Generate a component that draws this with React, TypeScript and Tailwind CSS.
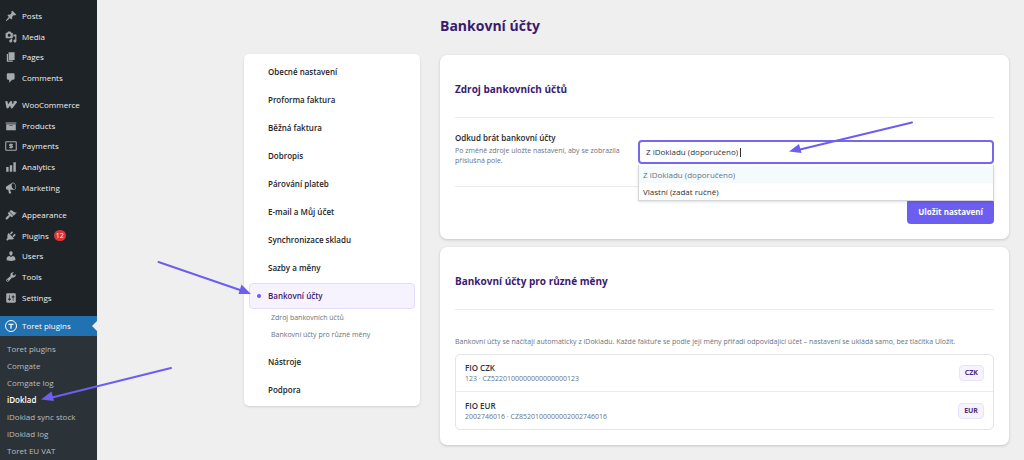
import { useState } from "react";
import type { ReactNode } from "react";

interface MenuItem {
  label: string;
  icon: ReactNode;
  badge?: number;
}

function Dashicon({ d }: { d: string }) {
  return (
    <svg className="w-3 h-3 shrink-0" viewBox="0 0 20 20" fill="currentColor" aria-hidden="true">
      <path fillRule="evenodd" d={d} />
    </svg>
  );
}

function WooIcon() {
  return (
    <svg className="w-3 h-3 shrink-0" viewBox="0 0 24 24" fill="none" stroke="currentColor" aria-hidden="true">
      <path strokeWidth="4.5" strokeLinejoin="round" d="M1 6h2L5 16.500L12 6.500L13.500 16.500L22.500 5" />
      <path strokeWidth="3" d="M17 6h6" />
    </svg>
  );
}

function PaymentsIcon() {
  return (
    <svg className="w-3 h-3 shrink-0" viewBox="0 0 24 24" fill="none" stroke="currentColor" aria-hidden="true">
      <rect x="1.500" y="3.500" width="21" height="17" rx="1" strokeWidth="2.200" />
      <path strokeWidth="2.200" d="M15.500 9.300h-5a1.400 1.400 0 0 0 0 2.800h3a1.400 1.400 0 0 1 0 2.800H8.500M12 7v10" />
    </svg>
  );
}

function ToretIcon() {
  return (
    <svg className="w-3 h-3 shrink-0" viewBox="0 0 24 24" fill="none" stroke="currentColor" aria-hidden="true">
      <circle cx="12" cy="12" r="11" strokeWidth="2" />
      <path strokeWidth="2.500" d="M7 8.500h10M12 8.500v9" />
    </svg>
  );
}

const contentMenu: MenuItem[] = [
  { label: "Posts", icon: <Dashicon d="M10.44 3.02l1.82-1.82 6.36 6.35-1.83 1.82c-1.05-.68-2.48-.57-3.41.36l-.75.75c-.92.93-1.04 2.35-.35 3.41l-1.83 1.82-2.41-2.41-2.8 2.79c-.42.42-3.38 2.71-3.8 2.29s1.86-3.39 2.28-3.81l2.79-2.79L4.1 9.36l1.83-1.82c1.05.69 2.48.57 3.4-.36l.75-.75c.93-.92 1.05-2.35.36-3.41z" /> },
  { label: "Media", icon: <Dashicon d="M13 11V4c0-.55-.45-1-1-1h-1.67L9 1H5L3.67 3H2c-.55 0-1 .45-1 1v7c0 .55.45 1 1 1h10c.55 0 1-.45 1-1zM7 4.5c1.38 0 2.5 1.12 2.5 2.5S8.38 9.5 7 9.5 4.5 8.38 4.5 7 5.62 4.5 7 4.5zM14 6h5v10.5c0 1.38-1.12 2.5-2.5 2.5S14 17.88 14 16.5s1.12-2.5 2.5-2.5c.17 0 .34.02.5.05V9h-3V6zm-4 8.05V13h2v3.5c0 1.38-1.12 2.5-2.5 2.5S7 17.88 7 16.5 8.12 14 9.5 14c.17 0 .34.02.5.05z" /> },
  { label: "Pages", icon: <Dashicon d="M6 15V2h10v13H6zm-1 1h8v2H3V5h2v11z" /> },
  { label: "Comments", icon: <Dashicon d="M5 2h9c1.1 0 2 .9 2 2v7c0 1.1-.9 2-2 2h-2l-5 5v-5H5c-1.1 0-2-.9-2-2V4c0-1.1.9-2 2-2z" /> },
];

const shopMenu: MenuItem[] = [
  { label: "WooCommerce", icon: <WooIcon /> },
  { label: "Products", icon: <Dashicon d="M19 4v2H1V4h18zM2 7h16v10H2V7zm11 3V9H7v1h6z" /> },
  { label: "Payments", icon: <PaymentsIcon /> },
  { label: "Analytics", icon: <Dashicon d="M18 18V2h-4v16h4zm-6 0V7H8v11h4zm-6 0v-8H2v8h4z" /> },
  { label: "Marketing", icon: <Dashicon d="M18.15 5.94c.46 1.62.38 3.22-.02 4.48-.42 1.28-1.26 2.18-2.3 2.48-.16.06-.26.06-.4.06-.06.02-.12.02-.18.02-.06.02-.14.02-.22.02h-6.8l2.22 5.5c.02.14-.06.26-.14.34-.08.1-.24.16-.34.16H6.95c-.1 0-.26-.06-.34-.16-.08-.08-.16-.2-.14-.34l-1-5.5H4.25l-.02-.02c-.5.06-1.08-.18-1.54-.62s-.88-1.08-1.06-1.88c-.24-.8-.2-1.56-.02-2.2.18-.62.58-1.08 1.06-1.3l.02-.02 9-5.4c.1-.06.18-.1.24-.16.06-.04.14-.08.24-.12.16-.08.28-.12.5-.18 1.04-.3 2.24.1 3.22.98s1.84 2.24 2.26 3.86zm-2.58 5.98h-.02c.4-.1.74-.34 1.04-.7.58-.7.86-1.76.86-3.04 0-.64-.1-1.3-.28-1.98-.34-1.36-1.02-2.5-1.78-3.24s-1.68-1.1-2.46-.88c-.82.22-1.4.96-1.7 2-.32 1.04-.28 2.36.06 3.72.38 1.36 1 2.5 1.8 3.24.78.74 1.62 1.1 2.48.88z" /> },
];

const adminMenu: MenuItem[] = [
  { label: "Appearance", icon: <Dashicon d="M14.48 11.06L7.41 3.99l1.5-1.5c.5-.56 2.3-.47 3.51.32 1.21.8 1.43 1.28 2.91 2.1 1.18.64 2.45 1.26 4.45.85zm-.71.71L6.7 4.7 4.93 6.47c-.39.39-.39 1.02 0 1.41l1.06 1.06c.39.39.39 1.03 0 1.42-.6.6-1.43 1.11-2.21 1.69-.35.26-.7.53-1.01.84C1.43 14.23.4 16.08 1.4 17.07c.99 1 2.84-.03 4.18-1.36.31-.31.58-.66.85-1.02.57-.78 1.08-1.61 1.69-2.21.39-.39 1.02-.39 1.41 0l1.06 1.06c.39.39 1.02.39 1.41 0z" /> },
  { label: "Plugins", badge: 12, icon: <Dashicon d="M13.11 4.36L9.87 7.6 8 5.73l3.24-3.24c.35-.34 1.05-.2 1.56.32.52.51.66 1.21.31 1.55zm-8 1.77l.91-1.12 9.01 9.01-1.19.84c-.71.71-2.63 1.16-3.82 1.16H6.14L4.9 17.26c-.59.59-1.54.59-2.12 0-.59-.58-.59-1.53 0-2.12l1.24-1.24v-3.88c0-1.13.4-3.19 1.09-3.89zm7.26 3.97l3.24-3.24c.34-.35 1.04-.21 1.55.31.52.51.66 1.21.31 1.55l-3.24 3.25z" /> },
  { label: "Users", icon: <Dashicon d="M10 9.25c-2.27 0-2.73-3.44-2.73-3.44C7 4.02 7.82 2 9.97 2c2.16 0 2.98 2.02 2.71 3.81 0 0-.41 3.44-2.68 3.44zm0 2.57L12.72 10c2.39 0 4.52 2.33 4.52 4.53v2.49s-3.65 1.13-7.24 1.13c-3.65 0-7.24-1.13-7.24-1.13v-2.49c0-2.25 1.94-4.48 4.47-4.48z" /> },
  { label: "Tools", icon: <Dashicon d="M16.68 9.77c-1.34 1.34-3.3 1.67-4.95.99l-5.41 6.52c-.99.99-2.59.99-3.58 0s-.99-2.59 0-3.57l6.52-5.42c-.68-1.65-.35-3.61.99-4.95 1.28-1.28 3.12-1.62 4.72-1.06l-2.89 2.89 2.82 2.82 2.86-2.87c.53 1.58.18 3.39-1.08 4.65zM3.81 16.21c.4.39 1.04.39 1.43 0 .4-.4.4-1.04 0-1.43-.39-.4-1.03-.4-1.43 0-.39.39-.39 1.03 0 1.43z" /> },
  { label: "Settings", icon: <Dashicon d="M18 16V4c0-1.1-.9-2-2-2H4c-1.1 0-2 .9-2 2v12c0 1.1.9 2 2 2h12c1.1 0 2-.9 2-2zM8 11h1c.55 0 1 .45 1 1s-.45 1-1 1H8v1.5c0 .28-.22.5-.5.5s-.5-.22-.5-.5V13H6c-.55 0-1-.45-1-1s.45-1 1-1h1V5.5c0-.28.22-.5.5-.5s.5.22.5.5V11zm5-2h-1c-.55 0-1-.45-1-1s.45-1 1-1h1V5.5c0-.28.22-.5.5-.5s.5.22.5.5V7h1c.55 0 1 .45 1 1s-.45 1-1 1h-1v5.5c0 .28-.22.5-.5.5s-.5-.22-.5-.5V9z" /> },
];

const toretMenu = ["Toret plugins", "Comgate", "Comgate log", "iDoklad", "iDoklad sync stock", "iDoklad log", "Toret EU VAT"];

const sections = [
  "Obecné nastavení",
  "Proforma faktura",
  "Běžná faktura",
  "Dobropis",
  "Párování plateb",
  "E-mail a Můj účet",
  "Synchronizace skladu",
  "Sazby a měny",
  "Bankovní účty",
  "Nástroje",
  "Podpora",
];

const subsections = ["Zdroj bankovních účtů", "Bankovní účty pro různé měny"];

const sources = ["Z iDokladu (doporučeno)", "Vlastní (zadat ručně)"];

const accounts = [
  { name: "FIO CZK", number: "123 · CZ5220100000000000000123", currency: "CZK" },
  { name: "FIO EUR", number: "2002746016 · CZ8520100000002002746016", currency: "EUR" },
];

function MenuGroup({ items, className }: { items: MenuItem[]; className: string }) {
  return (
    <ul className={`flex flex-col ${className}`}>
      {items.map((item) => (
        <li key={item.label} className="flex-1 flex">
          <a href="#" className="flex-1 flex items-center gap-[5px] pl-[5px] text-[#a7aaad]">
            {item.icon}
            <span className="text-[8px] leading-3 text-[#f0f0f1]">{item.label}</span>
            {item.badge && (
              <span className="h-[11px] px-[2px] rounded-full bg-[#d63638] text-white text-[7px] leading-[11px]">
                {item.badge}
              </span>
            )}
          </a>
        </li>
      ))}
    </ul>
  );
}

function AdminSidebar() {
  return (
    <nav className="w-[97px] shrink-0 flex flex-col pt-1.5 bg-[#1d2327]">
      <MenuGroup items={contentMenu} className="h-[82px]" />
      <MenuGroup items={shopMenu} className="h-[103px] mt-[7px]" />
      <MenuGroup items={adminMenu} className="h-[103px] mt-[7px]" />
      <a href="#" className="relative mt-2 h-5 flex items-center gap-[5px] pl-[5px] bg-[#2271b1] text-white text-[8px] leading-3">
        <ToretIcon />
        Toret plugins
        <span className="absolute right-0 top-[5px] border-y-[5px] border-y-transparent border-r-[5px] border-r-[#efefef]" />
      </a>
      <ul className="flex-1 pt-1 bg-[#2c3338]">
        {toretMenu.map((label) => (
          <li key={label}>
            <a
              href="#"
              className={`block pl-[7px] text-[8px] leading-[17px] whitespace-nowrap ${
                label === "iDoklad" ? "text-white font-semibold" : "text-[#b9bcbf]"
              }`}
            >
              {label}
            </a>
          </li>
        ))}
      </ul>
    </nav>
  );
}

function SectionNav() {
  return (
    <nav className="w-[176px] shrink-0 mt-[54px] px-[5px] pt-[5px] pb-[3px] rounded-[5px] bg-white shadow-sm">
      <ul className="flex flex-col gap-0.5">
        {sections.map((label) => {
          const active = label === "Bankovní účty";
          return (
            <li key={label}>
              <a
                href="#"
                className={`h-[26px] flex items-center pl-[7px] rounded-[4px] border text-[8px] font-semibold ${
                  active ? "bg-[#f6f3fe] border-[#e4dcfc] text-[#3b1a6e]" : "border-transparent text-[#1d2327]"
                }`}
              >
                <span className={`w-1 h-1 mr-[7px] rounded-full ${active ? "bg-[#6c5cf0]" : ""}`} />
                {label}
              </a>
              {active && (
                <ul className="pb-1 pl-[22px]">
                  {subsections.map((sub) => (
                    <li key={sub}>
                      <a href="#" className="block text-[7px] leading-[17px] text-[#6b7280]">
                        {sub}
                      </a>
                    </li>
                  ))}
                </ul>
              )}
            </li>
          );
        })}
      </ul>
    </nav>
  );
}

function SourceField() {
  const [source, setSource] = useState(sources[0]);

  return (
    <div className="relative flex-1">
      <div className="h-6 flex items-center gap-0.5 pl-1.5 rounded-[4px] border-2 border-[#7467f0] bg-white">
        <input
          id="source"
          role="combobox"
          aria-expanded="true"
          aria-controls="source-options"
          value={source}
          onChange={(e) => setSource(e.target.value)}
          className="field-sizing-content text-[8px] leading-3 text-[#2c3338] outline-none"
        />
        <span className="w-px h-[9px] bg-[#2c3338]" />
      </div>
      <ul
        id="source-options"
        role="listbox"
        className="absolute top-[25px] inset-x-0 z-10 pt-px border border-t-0 border-[#d5d7da] bg-white shadow-sm"
      >
        {sources.map((option) => (
          <li
            key={option}
            role="option"
            aria-selected={option === source}
            onClick={() => setSource(option)}
            className={`pl-1 text-[8px] leading-[17px] ${
              option === source ? "bg-[#f5fafd] text-[#64748b]" : "text-[#303030]"
            }`}
          >
            {option}
          </li>
        ))}
      </ul>
    </div>
  );
}

function Card({ title, children }: { title: string; children: ReactNode }) {
  return (
    <section className="px-[15px] pb-[15px] rounded-[7px] bg-white shadow-[0_1px_3px_rgba(0,0,0,0.18)]">
      <h2 className="pt-[26px] pb-5 border-b border-[#eaebed] text-[10px] leading-4 font-bold text-[#3b1a6e]">
        {title}
      </h2>
      {children}
    </section>
  );
}

function Arrows() {
  return (
    <svg
      className="absolute top-0 left-0 z-20 pointer-events-none"
      width="1024"
      height="460"
      fill="#6c5ff0"
      stroke="#6c5ff0"
      aria-hidden="true"
    >
      <path strokeWidth="2" strokeLinecap="round" d="M158.500 262L240 290M171 368L52 397.500M912 122.500L800 149.500" />
      <path stroke="none" d="M251 294l-9.500-9.500-3 9.500zM41 399.500l10.500-8 2.500 9.500zM789 151.500l10-7.500 2.500 9z" />
    </svg>
  );
}

export default function App() {
  return (
    <div className="relative min-h-screen flex overflow-hidden bg-[#efefef] font-['Open_Sans','Noto_Sans',sans-serif]">
      <AdminSidebar />
      <div className="flex-1 flex items-start gap-5 pl-[147px] pr-[15px]">
        <SectionNav />
        <main className="flex-1 min-w-0">
          <h1 className="pt-4 pb-[19px] text-[14px] leading-5 font-bold text-[#3b1a6e]">Bankovní účty</h1>
          <div className="flex flex-col gap-2">
            <Card title="Zdroj bankovních účtů">
              <div className="flex pt-[14px] pb-5 border-b border-[#eaebed]">
                <div className="w-[183px] pr-3">
                  <label htmlFor="source" className="block text-[8px] leading-3 font-semibold text-[#1d2327]">
                    Odkud brát bankovní účty
                  </label>
                  <p className="mt-0.5 text-[7px] leading-[10px] text-[#6b7280]">
                    Po změně zdroje uložte nastavení, aby se zobrazila příslušná pole.
                  </p>
                </div>
                <div className="flex-1 flex pt-2">
                  <SourceField />
                </div>
              </div>
              <div className="flex justify-end pt-3">
                <button className="h-[25px] px-[11px] rounded-[4px] bg-[#6c5ff0] text-white text-[8px] font-bold">
                  Uložit nastavení
                </button>
              </div>
            </Card>
            <Card title="Bankovní účty pro různé měny">
              <p className="pt-[26px] pb-1.5 text-[7px] leading-3 text-[#6b7280]">
                Bankovní účty se načítají automaticky z iDokladu. Každé faktuře se podle její měny přiřadí odpovídající účet – nastavení se ukládá samo, bez tlačítka Uložit.
              </p>
              <ul className="rounded-[5px] border border-[#e2e4e8] divide-y divide-[#eaebed]">
                {accounts.map((account) => (
                  <li key={account.currency} className="h-[37px] flex items-center justify-between px-[9px]">
                    <div>
                      <p className="text-[8px] leading-3 font-semibold text-[#2b3440]">{account.name}</p>
                      <p className="text-[7px] leading-[10px] text-[#6b7280]">{account.number}</p>
                    </div>
                    <span className="h-4 px-[5px] rounded-[4px] border border-[#e9e2fd] bg-[#f6f3fe] text-[7px] leading-[14px] font-bold text-[#4a2d80]">
                      {account.currency}
                    </span>
                  </li>
                ))}
              </ul>
            </Card>
          </div>
        </main>
      </div>
      <Arrows />
    </div>
  );
}
